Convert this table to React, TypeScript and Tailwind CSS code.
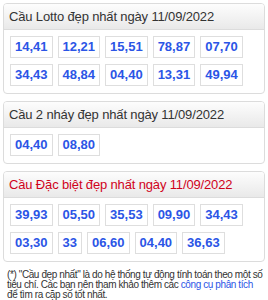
const panels: { title: string; red?: boolean; nums: string[] }[] = [
  {
    title: "Cầu Lotto đẹp nhất ngày 11/09/2022",
    nums: ["14,41", "12,21", "15,51", "78,87", "07,70", "34,43", "48,84", "04,40", "13,31", "49,94"],
  },
  {
    title: "Cầu 2 nháy đẹp nhất ngày 11/09/2022",
    nums: ["04,40", "08,80"],
  },
  {
    title: "Cầu Đặc biệt đẹp nhất ngày 11/09/2022",
    red: true,
    nums: ["39,93", "05,50", "35,53", "09,90", "34,43", "03,30", "33", "06,60", "04,40", "36,63"],
  },
];

function Panel({ title, red, nums }: { title: string; red?: boolean; nums: string[] }) {
  return (
    <div className="overflow-hidden rounded-[4px] border border-[#dcdcdc] bg-white">
      <div
        className={`flex h-[26px] items-center border-b border-[#dcdcdc] bg-[linear-gradient(180deg,#fdfdfd_0%,#e9e9e9_100%)] px-[5px] text-[13px] tracking-[-0.15px] ${
          red ? "text-[#d0021b]" : "text-[#333]"
        }`}
      >
        {title}
      </div>
      <div className="flex flex-wrap gap-x-[5px] gap-y-[6px] px-[6px] pb-[7px] pt-[6px]">
        {nums.map((n, i) => (
          <span
            key={i}
            className="flex h-[22px] items-center border border-[#dedede] bg-white px-[4px] text-[13px] font-bold text-[#2b55e6]"
          >
            {n}
          </span>
        ))}
      </div>
    </div>
  );
}

export default function App() {
  return (
    <div className="flex w-[268px] flex-col gap-[7px] bg-white px-[3px] pt-[3px] font-['Liberation_Sans',Arial,sans-serif]">
      {panels.map((p) => (
        <Panel key={p.title} {...p} />
      ))}
      <p className="pl-[4px] pr-[1px] pt-[1px] text-[10px] leading-[10px] tracking-[-0.4px] text-[#333]">
        (*) "Cầu đẹp nhất" là do hệ thống tự động tính toán theo một số tiêu chí. Các bạn nên tham khảo thêm
        các <span className="text-[#2b55e6]">công cụ phân tích</span> để tìm ra cặp số tốt nhất.
      </p>
    </div>
  );
}
